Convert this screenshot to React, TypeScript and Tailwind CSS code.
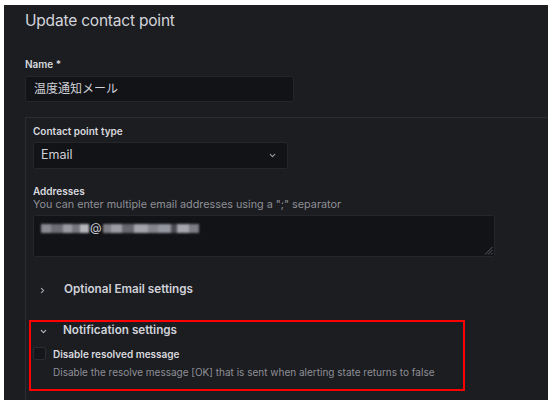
import React from 'react';

const font = "font-['Inter','Noto_Sans_CJK_JP',sans-serif]";

const ChevronDown = ({ className }: { className?: string }) => (
  <svg width="9" height="9" viewBox="0 0 24 24" fill="none" stroke="currentColor" strokeWidth="2.8" strokeLinecap="round" strokeLinejoin="round" className={className}>
    <polyline points="6 9 12 15 18 9" />
  </svg>
);

const ChevronRight = ({ className }: { className?: string }) => (
  <svg width="9" height="9" viewBox="0 0 24 24" fill="none" stroke="currentColor" strokeWidth="2.8" strokeLinecap="round" strokeLinejoin="round" className={className}>
    <polyline points="9 6 15 12 9 18" />
  </svg>
);

// pixelated, blurred email address (privacy mask)
const MaskedEmail = () => (
  <div className="flex items-center h-[12px]">
    <div className="flex blur-[0.8px]">
      <div className="w-[10px] h-[9px] bg-[#8a8b92]" />
      <div className="w-[12px] h-[9px] bg-[#6d6e75]" />
      <div className="w-[9px] h-[9px] bg-[#9a9ba2]" />
      <div className="w-[8px] h-[9px] bg-[#76777e]" />
      <div className="w-[9px] h-[9px] bg-[#b4b5bb]" />
    </div>
    <span className="text-[12px] leading-none text-[#c8c9d0] mx-[1px]">@</span>
    <div className="flex blur-[0.8px]">
      <div className="w-[8px] h-[9px] bg-[#7e7f86]" />
      <div className="w-[11px] h-[9px] bg-[#9c9da4]" />
      <div className="w-[12px] h-[9px] bg-[#66676e]" />
      <div className="w-[14px] h-[9px] bg-[#a3a4ab]" />
      <div className="w-[10px] h-[9px] bg-[#84858c]" />
      <div className="w-[13px] h-[9px] bg-[#9496a0]" />
      <div className="w-[6px] h-[9px] bg-[#4a4b52]" />
      <div className="w-[12px] h-[9px] bg-[#a6a7ae]" />
      <div className="w-[10px] h-[9px] bg-[#7c7d84]" />
    </div>
  </div>
);

export default function App() {
  return (
    <div className={`w-[556px] h-[410px] bg-white pt-[5px] pl-[4px] pr-[8px] pb-[10px] ${font}`}>
      <div className="h-full bg-[#1c1d21] overflow-hidden pl-[21px] pt-[4px]">
        <h1 className="text-[15.5px] leading-[24px] tracking-[-0.2px] text-[#d4d5dc] font-normal">Update contact point</h1>

        <div className="mt-[24px] text-[10px] leading-[14px] font-semibold text-[#d8d9de]">Name *</div>
        <div className="mt-[5px] w-[269px] h-[26px] bg-[#121317] border border-[#25262b] rounded-[2px] flex items-center pl-[8px]">
          <span className="text-[12px] text-[#d0d1d8]">温度通知メール</span>
        </div>

        <div className="mt-[15px] w-[700px] border-l border-t border-[#2c2d33] pl-[7px] pt-[6px] pb-[40px]">
          <div className="text-[10px] leading-[14px] font-semibold text-[#d8d9de]">Contact point type</div>
          <div className="mt-[4px] w-[255px] h-[27px] bg-[#121317] border border-[#25262b] rounded-[2px] flex items-center justify-between pl-[7px] pr-[10px]">
            <span className="text-[12.5px] text-[#d0d1d8]">Email</span>
            <ChevronDown className="text-[#9fa0a7]" />
          </div>

          <div className="mt-[15px] text-[10px] leading-[14px] font-semibold text-[#d8d9de]">Addresses</div>
          <div className="text-[10.8px] leading-[14px] text-[#8e8f96]">You can enter multiple email addresses using a ";" separator</div>
          <div className="mt-[3px] w-[462px] h-[42px] bg-[#121317] border border-[#25262b] rounded-[2px] pl-[7px] pt-[6px] flex flex-col justify-between">
            <MaskedEmail />
            <svg width="9" height="9" viewBox="0 0 9 9" className="self-end mr-[1px] mb-[1px]">
              <line x1="8.5" y1="1" x2="1" y2="8.5" stroke="#5b5c62" strokeWidth="1" />
              <line x1="8.5" y1="4" x2="4" y2="8.5" stroke="#5b5c62" strokeWidth="1" />
              <line x1="8.5" y1="7" x2="7" y2="8.5" stroke="#5b5c62" strokeWidth="1" />
            </svg>
          </div>

          <div className="mt-[24px] flex items-center h-[18px]">
            <ChevronRight className="ml-[5px] text-[#c0c1c8]" />
            <span className="ml-[17px] text-[11.7px] font-semibold text-[#d0d1d8]">Optional Email settings</span>
          </div>

          <div className="mt-[21px] -ml-[4px] w-[436px] h-[71px] border-2 border-[#ff0000] pl-[2px]">
            <div className="flex items-center h-[18px]">
              <ChevronDown className="ml-[6px] text-[#c0c1c8]" />
              <span className="ml-[15px] text-[11.7px] font-semibold text-[#d0d1d8]">Notification settings</span>
            </div>
            <div className="mt-[7px] flex">
              <div className="w-[13px] h-[13px] bg-[#15161a] border border-[#2c2d33] rounded-[2px]" />
              <div className="ml-[7px]">
                <div className="text-[10px] leading-[14px] font-semibold text-[#d8d9de]">Disable resolved message</div>
                <div className="mt-[4px] text-[10px] leading-[14px] text-[#8e8f96]">Disable the resolve message [OK] that is sent when alerting state returns to false</div>
              </div>
            </div>
          </div>
        </div>
      </div>
    </div>
  );
}
